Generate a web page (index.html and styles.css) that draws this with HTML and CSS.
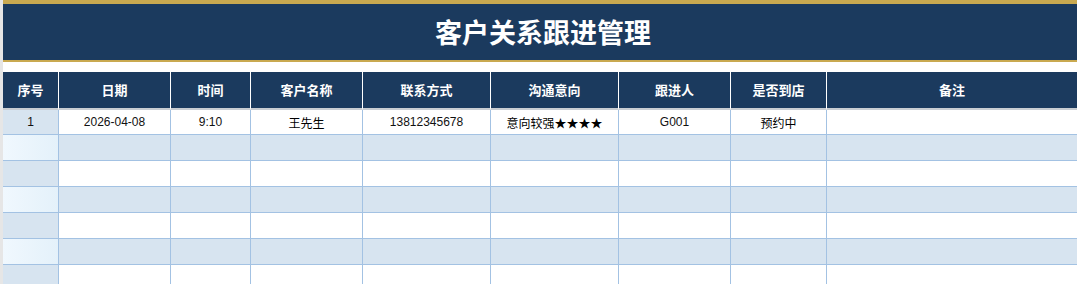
FILE: index.html
```html
<!DOCTYPE html>
<html lang="zh">
<head>
<meta charset="utf-8">
<link rel="stylesheet" href="styles.css">
</head>
<body>
<div class="page">
  <div class="gutter"></div>
  <div class="sheet">
    <div class="title">客户关系跟进管理</div>
    <div class="spacer"></div>
    <div class="grid">
      <div class="hd">序号</div><div class="hd">日期</div><div class="hd">时间</div><div class="hd">客户名称</div><div class="hd">联系方式</div><div class="hd">沟通意向</div><div class="hd">跟进人</div><div class="hd">是否到店</div><div class="hd last">备注</div>

      <div class="c idx odd">1</div><div class="c">2026-04-08</div><div class="c">9:10</div><div class="c cjk">王先生</div><div class="c">13812345678</div><div class="c cjk">意向较强★★★★</div><div class="c">G001</div><div class="c cjk">预约中</div><div class="c last"></div>

      <div class="c idx even"></div><div class="c b"></div><div class="c b"></div><div class="c b"></div><div class="c b"></div><div class="c b"></div><div class="c b"></div><div class="c b"></div><div class="c b last"></div>

      <div class="c idx odd"></div><div class="c"></div><div class="c"></div><div class="c"></div><div class="c"></div><div class="c"></div><div class="c"></div><div class="c"></div><div class="c last"></div>

      <div class="c idx even"></div><div class="c b"></div><div class="c b"></div><div class="c b"></div><div class="c b"></div><div class="c b"></div><div class="c b"></div><div class="c b"></div><div class="c b last"></div>

      <div class="c idx odd"></div><div class="c"></div><div class="c"></div><div class="c"></div><div class="c"></div><div class="c"></div><div class="c"></div><div class="c"></div><div class="c last"></div>

      <div class="c idx even"></div><div class="c b"></div><div class="c b"></div><div class="c b"></div><div class="c b"></div><div class="c b"></div><div class="c b"></div><div class="c b"></div><div class="c b last"></div>

      <div class="c idx odd"></div><div class="c"></div><div class="c"></div><div class="c"></div><div class="c"></div><div class="c"></div><div class="c"></div><div class="c"></div><div class="c last"></div>
    </div>
  </div>
</div>
</body>
</html>
```

FILE: styles.css
```css
html, body {
  margin: 0;
  padding: 0;
  background: #ffffff;
  overflow: hidden;
}
.page {
  display: flex;
  width: 1077px;
  height: 284px;
  overflow: hidden;
}
.gutter {
  width: 3px;
  flex: none;
  background: #e6e6e6;
}
.sheet {
  flex: 1;
  min-width: 0;
}
.title {
  box-sizing: border-box;
  height: 62px;
  border-top: 4px solid #c9a950;
  border-bottom: 2px solid #c9a950;
  background: #1b3a5e;
  color: #ffffff;
  font-family: "Noto Sans CJK SC", "Liberation Sans", sans-serif;
  font-weight: 700;
  font-size: 27px;
  line-height: 56px;
  text-align: center;
  padding-left: 6px;
}
.spacer {
  height: 10px;
}
.grid {
  display: grid;
  grid-template-columns: 56px 112px 80px 112px 128px 128px 112px 96px 1fr;
  grid-auto-rows: 26px;
  grid-template-rows: 38px 25px;
}
.hd {
  box-sizing: border-box;
  background: #1b3a5e;
  color: #ffffff;
  font-family: "Noto Sans CJK SC", "Liberation Sans", sans-serif;
  font-weight: 700;
  font-size: 13px;
  display: flex;
  align-items: center;
  justify-content: center;
  border-right: 1px solid #ffffff;
  border-bottom: 2px solid #c9cdd2;
  padding-bottom: 1px;
}
.hd.last, .c.last {
  border-right: none;
}
.c {
  box-sizing: border-box;
  background: #ffffff;
  color: #111111;
  font-family: "Liberation Sans", Arial, "Noto Sans CJK SC", sans-serif;
  font-size: 12px;
  display: flex;
  align-items: center;
  justify-content: center;
  border-right: 1px solid #a3c2e3;
  border-bottom: 1px solid #a3c2e3;
}
.c.cjk {
  font-family: "Noto Sans CJK SC", "Liberation Sans", sans-serif;
  font-size: 12px;
  color: #000000;
}
.c.b {
  background: #d7e4f0;
}
.c.idx.odd {
  background: #d7e4f0;
}
.c.idx.even {
  background: linear-gradient(90deg, #f0f8fe, #e4f1fa);
}
```
